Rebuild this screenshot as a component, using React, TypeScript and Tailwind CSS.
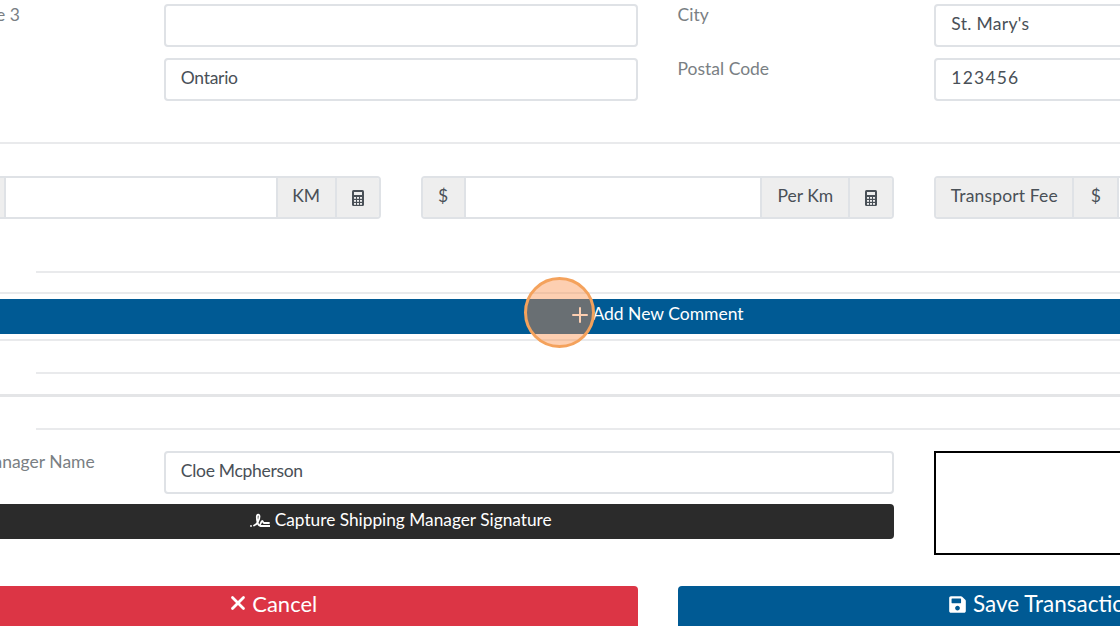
import React from 'react';
import { Plus, X } from 'lucide-react';
import { FaSave } from 'react-icons/fa';

const inputClass = "h-[43px] w-full rounded border-2 border-[#dfe2e6] bg-white px-[15px] text-[17.5px] leading-[35px] text-[#495057]";
const addonClass = "flex h-full shrink-0 items-center justify-center border-l-2 border-[#dfe2e6] bg-[#eeeeee] pb-[3px] text-[17.5px] text-[#495057]";
const firstAddonClass = "flex h-full shrink-0 items-center justify-center bg-[#eeeeee] pb-[3px] text-[17.5px] text-[#495057]";
const labelClass = "col-span-2 text-[17.5px] leading-[22px] text-[#7a7f84]";

const Field = ({ label, value, className = '' }: { label: string; value?: string; className?: string }) => (
    <>
        <label className={`${labelClass} h-[43px]`}>{label}</label>
        <div className={`col-span-4 ${inputClass} ${className}`}>{value}</div>
    </>
);

const CalculatorIcon = () => (
    <svg width="12" height="16" viewBox="0 0 12 16">
        <rect width="12" height="16" rx="1.5" fill="#495057" />
        <rect x="2" y="2" width="8" height="3" fill="#eeeeee" />
        {[7, 10, 13].map((y) =>
            [2, 5, 8].map((x) => <rect key={`${x}-${y}`} x={x} y={y} width="2" height="1.8" fill="#eeeeee" />)
        )}
    </svg>
);

const SignatureIcon = () => (
    <svg width="20" height="15" viewBox="0 0 20 15" fill="none" stroke="white" strokeWidth="1.8" strokeLinecap="round">
        <circle cx="1" cy="13" r="0.9" fill="white" stroke="none" />
        <path d="M4 12.5C7 11.5 9.5 7 9.5 3.5C9.5 0.8 6.8 0.8 6.8 4C6.8 7 8 12.5 9.3 12.5C10.5 12.5 11 8 12.2 8C13.2 8 13 10 14 10L19 10" />
        <path d="M10.5 13L20 13" />
    </svg>
);

const Calc = () => (
    <div className="flex h-full w-[44px] shrink-0 items-center justify-center border-l-2 border-[#dfe2e6] bg-[#eeeeee]">
        <CalculatorIcon />
    </div>
);

const Divider = ({ className }: { className: string }) => <div className={`border-t-2 border-[#e9eaec] ${className}`} />;

export default function App() {
    return (
        <div className="relative h-[626px] w-[1120px] overflow-hidden bg-white" style={{ fontFamily: 'Lato, sans-serif' }}>
            <div className="ml-[-93px] w-[1501px] pt-1">
                <div className="grid grid-cols-12 gap-x-10 gap-y-[11px]">
                    <Field label="Address Line 3" />
                    <Field label="City" value="St. Mary's" className="tracking-[0.3px]" />
                    <Field label="Province" value="Ontario" className="tracking-[-0.3px]" />
                    <Field label="Postal Code" value="123456" className="tracking-[1.2px]" />
                </div>

                <Divider className="mt-[41px]" />

                <div className="mt-[32px] grid grid-cols-3 gap-x-10">
                    <div className="flex h-[43px] overflow-hidden rounded border-2 border-[#dfe2e6]">
                        <div className={`${firstAddonClass} w-[95px]`}>Distance</div>
                        <div className="min-w-0 flex-1 border-l-2 border-[#dfe2e6] bg-white" />
                        <div className={`${addonClass} w-[59px]`}>KM</div>
                        <Calc />
                    </div>
                    <div className="flex h-[43px] overflow-hidden rounded border-2 border-[#dfe2e6]">
                        <div className={`${firstAddonClass} w-[41px]`}>$</div>
                        <div className="min-w-0 flex-1 border-l-2 border-[#dfe2e6] bg-white" />
                        <div className={`${addonClass} w-[88px]`}>Per Km</div>
                        <Calc />
                    </div>
                    <div className="flex h-[43px] overflow-hidden rounded border-2 border-[#dfe2e6]">
                        <div className={`${firstAddonClass} w-[136px] tracking-[0.15px]`}>Transport Fee</div>
                        <div className={`${addonClass} w-[45px]`}>$</div>
                        <div className="min-w-0 flex-1 border-l-2 border-[#dfe2e6] bg-white" />
                    </div>
                </div>

                <Divider className="ml-[129px] mt-[52px]" />
                <Divider className="mt-[19px]" />

                <button className="mt-[5px] flex h-[35px] w-full items-center justify-center bg-[#005a94] pb-[4px] text-[17.5px] text-white">
                    <Plus className="-ml-[3px] h-6 w-6" strokeWidth={2} />
                    Add New Comment
                </button>

                <Divider className="mt-[5px]" />
                <Divider className="ml-[129px] mt-[31px]" />
                <div className="mt-[20px] border-t-[3px] border-[#e4e5e7]" />
                <Divider className="ml-[129px] mt-[31px]" />

                <div className="mt-[21px] grid grid-cols-12 gap-x-10">
                    <div className="col-span-8 grid grid-cols-8 content-start gap-x-10 gap-y-[10px]">
                        <label className={labelClass}>Shipping Manager Name</label>
                        <div className={`col-span-6 ${inputClass} tracking-[-0.3px]`}>Cloe Mcpherson</div>
                        <button className="col-span-8 flex h-[35px] items-center justify-center gap-[5px] rounded bg-[#2b2b2b] pb-[3px] text-[17.3px] text-white">
                            <SignatureIcon />
                            Capture Shipping Manager Signature
                        </button>
                    </div>
                    <div className="col-span-4 h-[104px] border-2 border-black" />
                </div>

                <div className="mt-[31px] grid grid-cols-2 gap-x-10">
                    <button className="flex h-[50px] items-center justify-center gap-[3px] rounded bg-[#dc3545] pb-[16px] text-[22px] text-white">
                        <X className="h-[22px] w-[22px]" strokeWidth={3} />
                        Cancel
                    </button>
                    <button className="flex h-[50px] items-center justify-center gap-[6px] rounded bg-[#005a94] pb-[14px] text-[22.5px] text-white">
                        <FaSave className="h-[19px] w-[19px]" />
                        Save Transaction
                    </button>
                </div>
            </div>

            {/* click highlight */}
            <div className="absolute left-[524px] top-[277px] h-[71px] w-[71px] rounded-full border-[3px] border-[#f4a25c] bg-[#fa8c46]/42" />
        </div>
    );
}
